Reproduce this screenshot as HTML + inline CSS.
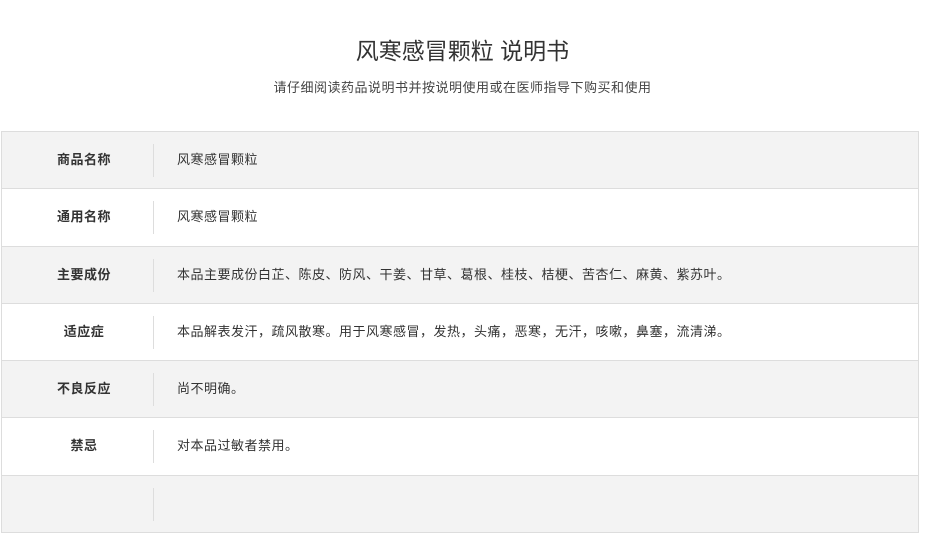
<!DOCTYPE html>
<html><head><meta charset="utf-8"><style>
body{margin:0;background:#fff;font-family:"Liberation Sans","Noto Sans CJK SC",sans-serif;color:#333;width:925px;height:491px;overflow:hidden;position:relative}
h1{position:absolute;top:36px;left:0;width:925px;text-align:center;font-size:23px;font-weight:normal;margin:0;color:#333;line-height:30px}
.sub{position:absolute;top:79px;left:0;width:925px;text-align:center;font-size:13px;letter-spacing:0.5px;color:#444;line-height:18px}
.tbl{position:absolute;top:131px;left:1px;width:916px;border:1px solid #ddd;border-bottom:none}
.r{height:56.3px;border-bottom:1px solid #ddd;position:relative;font-size:13px;letter-spacing:0.5px}
.r:nth-child(odd){background:#f3f3f3}
.l{position:absolute;left:6px;width:152px;top:0;line-height:56px;text-align:center;font-weight:bold;color:#333}
.d{position:absolute;left:151px;top:12px;height:33px;border-left:1px solid #ddd}
.v{position:absolute;left:175px;top:0;line-height:56px;color:#333}
</style></head><body>
<h1>风寒感冒颗粒 说明书</h1>
<div class="sub">请仔细阅读药品说明书并按说明使用或在医师指导下购买和使用</div>
<div class="tbl">
<div class="r"><div class="l">商品名称</div><div class="d"></div><div class="v">风寒感冒颗粒</div></div>
<div class="r"><div class="l">通用名称</div><div class="d"></div><div class="v">风寒感冒颗粒</div></div>
<div class="r"><div class="l">主要成份</div><div class="d"></div><div class="v">本品主要成份白芷、陈皮、防风、干姜、甘草、葛根、桂枝、桔梗、苦杏仁、麻黄、紫苏叶。</div></div>
<div class="r"><div class="l">适应症</div><div class="d"></div><div class="v">本品解表发汗，疏风散寒。用于风寒感冒，发热，头痛，恶寒，无汗，咳嗽，鼻塞，流清涕。</div></div>
<div class="r"><div class="l">不良反应</div><div class="d"></div><div class="v">尚不明确。</div></div>
<div class="r"><div class="l">禁忌</div><div class="d"></div><div class="v">对本品过敏者禁用。</div></div>
<div class="r"><div class="l"></div><div class="d"></div><div class="v"></div></div>
</div>
</body></html>
